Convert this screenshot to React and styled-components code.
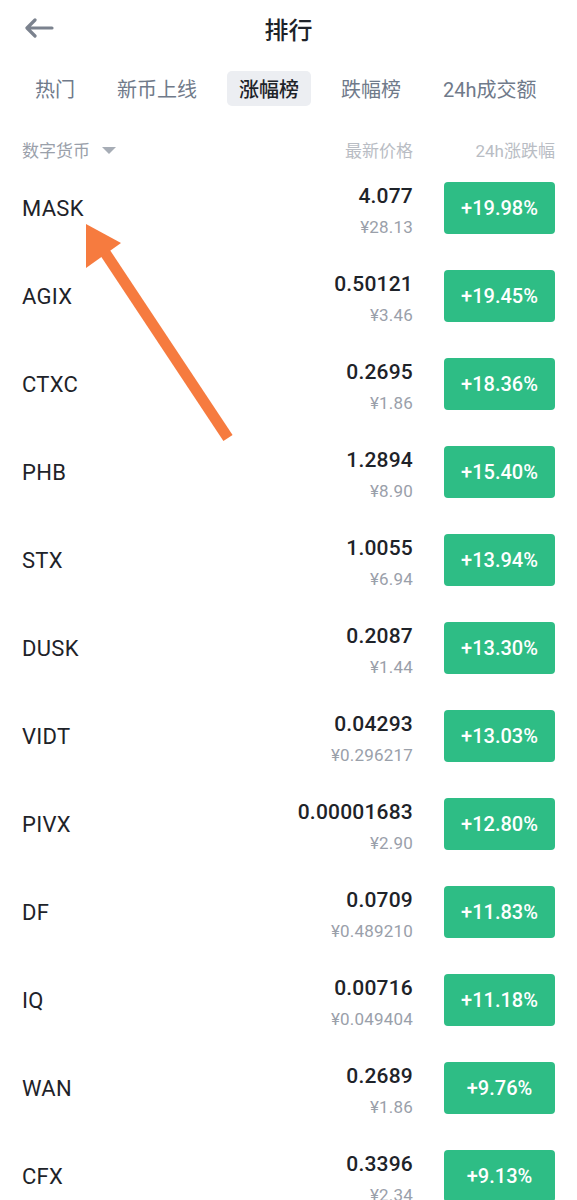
import React from 'react'
import styled, { createGlobalStyle } from 'styled-components'

const GlobalStyle = createGlobalStyle`
  html, body {
    margin: 0;
    padding: 0;
    background: #ffffff;
  }
  body {
    font-family: Roboto, "Noto Sans CJK SC", "Noto Sans", sans-serif;
    color: #1e2329;
  }
`

const Page = styled.div`
  position: relative;
  width: 577px;
  height: 1200px;
  overflow: hidden;
  background: #fff;
`

const NavBar = styled.header`
  position: relative;
  height: 56px;
  display: flex;
  align-items: center;
  justify-content: center;
`

const BackButton = styled.button`
  position: absolute;
  left: 22px;
  top: 14px;
  width: 34px;
  height: 28px;
  padding: 0;
  border: 0;
  background: none;
  display: flex;
  align-items: center;
  justify-content: center;
`

const Title = styled.h1`
  margin: 0;
  font-family: "Noto Sans CJK SC", sans-serif;
  font-size: 24px;
  font-weight: 500;
  color: #1e2329;
`

const Tabs = styled.nav`
  display: flex;
  gap: 18px;
  padding-left: 23px;
  margin-top: 15px;
`

const Tab = styled.div`
  height: 35px;
  padding: 0 12px;
  display: flex;
  align-items: center;
  border-radius: 5px;
  font-family: Roboto, "Noto Sans CJK SC", sans-serif;
  font-size: 20px;
  font-weight: ${p => (p.$active ? 500 : 400)};
  color: ${p => (p.$active ? '#1e2329' : '#707a8a')};
  background: ${p => (p.$active ? '#eceef2' : 'transparent')};
  white-space: nowrap;
`

const ColumnHeader = styled.div`
  height: 30px;
  margin-top: 28px;
  padding: 0 22px;
  display: flex;
  align-items: center;
  font-family: Roboto, "Noto Sans CJK SC", sans-serif;
  font-size: 17px;
`

const SortLabel = styled.div`
  flex: 1;
  display: flex;
  align-items: center;
  gap: 12px;
  color: #9aa0aa;
`

const Caret = styled.span`
  width: 0;
  height: 0;
  border-left: 7px solid transparent;
  border-right: 7px solid transparent;
  border-top: 7px solid #a7adb6;
  margin-top: 2px;
`

const HeadCell = styled.div`
  color: #b9bdc4;
  text-align: right;
  width: ${p => p.$w}px;
`

const List = styled.ul`
  list-style: none;
  margin: 0;
  padding: 0;
`

const Row = styled.li`
  height: 88px;
  padding: 0 22px;
  display: flex;
  align-items: center;
`

const Symbol = styled.div`
  flex: 1;
  font-size: 22px;
  color: #1e2329;
  letter-spacing: 0.3px;
`

const Price = styled.div`
  display: flex;
  flex-direction: column;
  align-items: flex-end;
  gap: 7px;
  padding-top: 5px;
`

const Last = styled.div`
  font-size: 21px;
  line-height: 26px;
  font-weight: 500;
  color: #1e2329;
  letter-spacing: 0.2px;
`

const Fiat = styled.div`
  font-size: 17px;
  line-height: 22px;
  color: #9aa0aa;
  letter-spacing: 0.2px;
`

const Change = styled.div`
  width: 111px;
  height: 52px;
  margin-left: 31px;
  border-radius: 4px;
  background: #2ebd85;
  color: #fff;
  font-size: 20px;
  font-weight: 500;
  display: flex;
  align-items: center;
  justify-content: center;
`

const Overlay = styled.svg`
  position: absolute;
  left: 0;
  top: 0;
  pointer-events: none;
`

const tabs = ['热门', '新币上线', '涨幅榜', '跌幅榜', '24h成交额']

const coins = [
  ['MASK', '4.077', '¥28.13', '+19.98%'],
  ['AGIX', '0.50121', '¥3.46', '+19.45%'],
  ['CTXC', '0.2695', '¥1.86', '+18.36%'],
  ['PHB', '1.2894', '¥8.90', '+15.40%'],
  ['STX', '1.0055', '¥6.94', '+13.94%'],
  ['DUSK', '0.2087', '¥1.44', '+13.30%'],
  ['VIDT', '0.04293', '¥0.296217', '+13.03%'],
  ['PIVX', '0.00001683', '¥2.90', '+12.80%'],
  ['DF', '0.0709', '¥0.489210', '+11.83%'],
  ['IQ', '0.00716', '¥0.049404', '+11.18%'],
  ['WAN', '0.2689', '¥1.86', '+9.76%'],
  ['CFX', '0.3396', '¥2.34', '+9.13%'],
]

const BackArrow = () => (
  <svg width="30" height="20" viewBox="0 0 30 20" fill="none">
    <path d="M28 10H4M11 2L3 10l8 8" stroke="#7b828e" strokeWidth="3.2" strokeLinecap="round" strokeLinejoin="round" />
  </svg>
)

const App = () => (
  <Page>
    <GlobalStyle />
    <NavBar>
      <BackButton aria-label="back">
        <BackArrow />
      </BackButton>
      <Title>排行</Title>
    </NavBar>
    <Tabs>
      {tabs.map(t => (
        <Tab key={t} $active={t === '涨幅榜'}>{t}</Tab>
      ))}
    </Tabs>
    <ColumnHeader>
      <SortLabel>
        数字货币
        <Caret />
      </SortLabel>
      <HeadCell $w={90}>最新价格</HeadCell>
      <HeadCell $w={142}>24h涨跌幅</HeadCell>
    </ColumnHeader>
    <List>
      {coins.map(([sym, last, fiat, chg]) => (
        <Row key={sym}>
          <Symbol>{sym}</Symbol>
          <Price>
            <Last>{last}</Last>
            <Fiat>{fiat}</Fiat>
          </Price>
          <Change>{chg}</Change>
        </Row>
      ))}
    </List>
    <Overlay width="577" height="1200" viewBox="0 0 577 1200">
      <line x1="228" y1="438" x2="100" y2="245" stroke="#f67b3f" strokeWidth="11" />
      <polygon points="86,224 121,243 86,268" fill="#f67b3f" />
    </Overlay>
  </Page>
)

export default App
